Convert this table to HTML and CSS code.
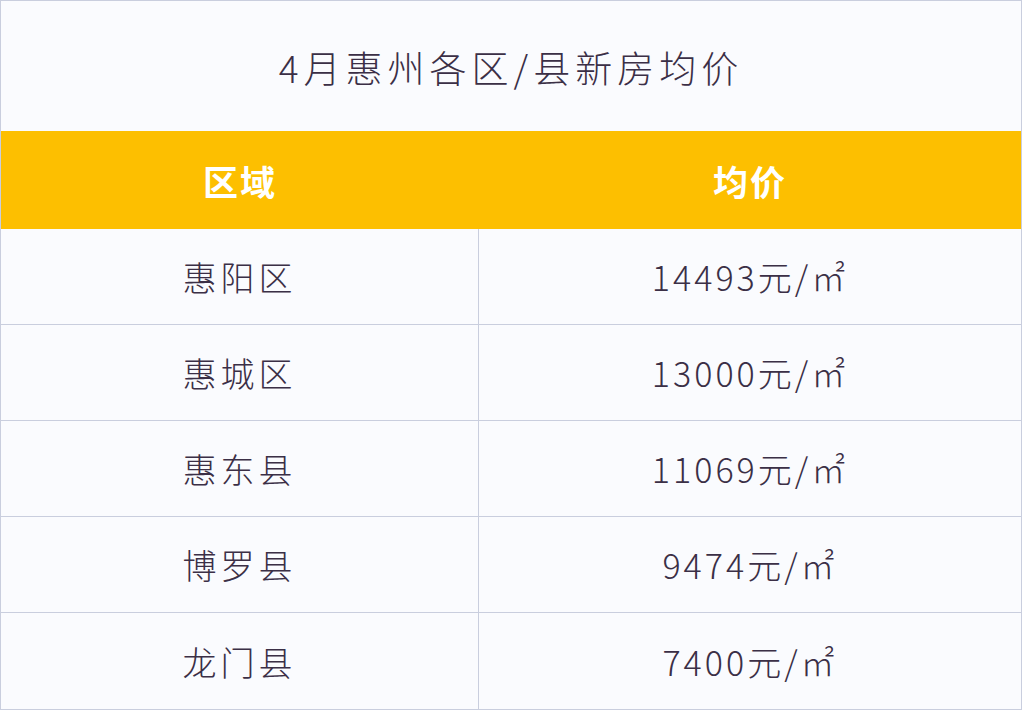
FILE: index.html
```html
<!DOCTYPE html>
<html lang="zh">
<head>
<meta charset="utf-8">
<link rel="stylesheet" href="styles.css">
</head>
<body>
<div class="sheet">
  <div class="title">4月惠州各区/县新房均价</div>
  <div class="head">
    <div class="cell">区域</div>
    <div class="cell">均价</div>
  </div>
  <div class="row"><div class="cell name">惠阳区</div><div class="cell val">14493元/㎡</div></div>
  <div class="row"><div class="cell name">惠城区</div><div class="cell val">13000元/㎡</div></div>
  <div class="row"><div class="cell name">惠东县</div><div class="cell val">11069元/㎡</div></div>
  <div class="row"><div class="cell name">博罗县</div><div class="cell val">9474元/㎡</div></div>
  <div class="row"><div class="cell name">龙门县</div><div class="cell val">7400元/㎡</div></div>
</div>
</body>
</html>
```
FILE: styles.css
```css
html, body {
  margin: 0;
  padding: 0;
  background: #fafbfe;
}
.sheet {
  width: 1022px;
  height: 710px;
  box-sizing: border-box;
  border: 1px solid #c9cede;
  background: #fafbfe;
  font-family: "Noto Sans CJK SC", "Noto Sans", sans-serif;
  color: #3b2f46;
  display: flex;
  flex-direction: column;
}
.title {
  height: 130px;
  display: flex;
  align-items: center;
  justify-content: center;
  font-size: 37px;
  font-weight: 300;
  letter-spacing: 5px;
  padding-top: 2px;
  box-sizing: border-box;
}
.head {
  height: 98px;
  background: #fdbf00;
  display: grid;
  grid-template-columns: 478px 1fr;
  color: #ffffff;
  font-weight: bold;
  font-size: 35px;
  letter-spacing: 2px;
}
.head .cell {
  display: flex;
  align-items: center;
  justify-content: center;
}
.row {
  height: 96px;
  display: grid;
  grid-template-columns: 478px 1fr;
  border-bottom: 1px solid #c9cede;
  box-sizing: border-box;
}
.row:last-child {
  border-bottom: none;
}
.row .cell {
  display: flex;
  align-items: center;
  justify-content: center;
  font-size: 34px;
  font-weight: 300;
  letter-spacing: 4px;
}
.row .name {
  border-right: 1px solid #c9cede;
}
.row .val {
  letter-spacing: 3px;
}
```
